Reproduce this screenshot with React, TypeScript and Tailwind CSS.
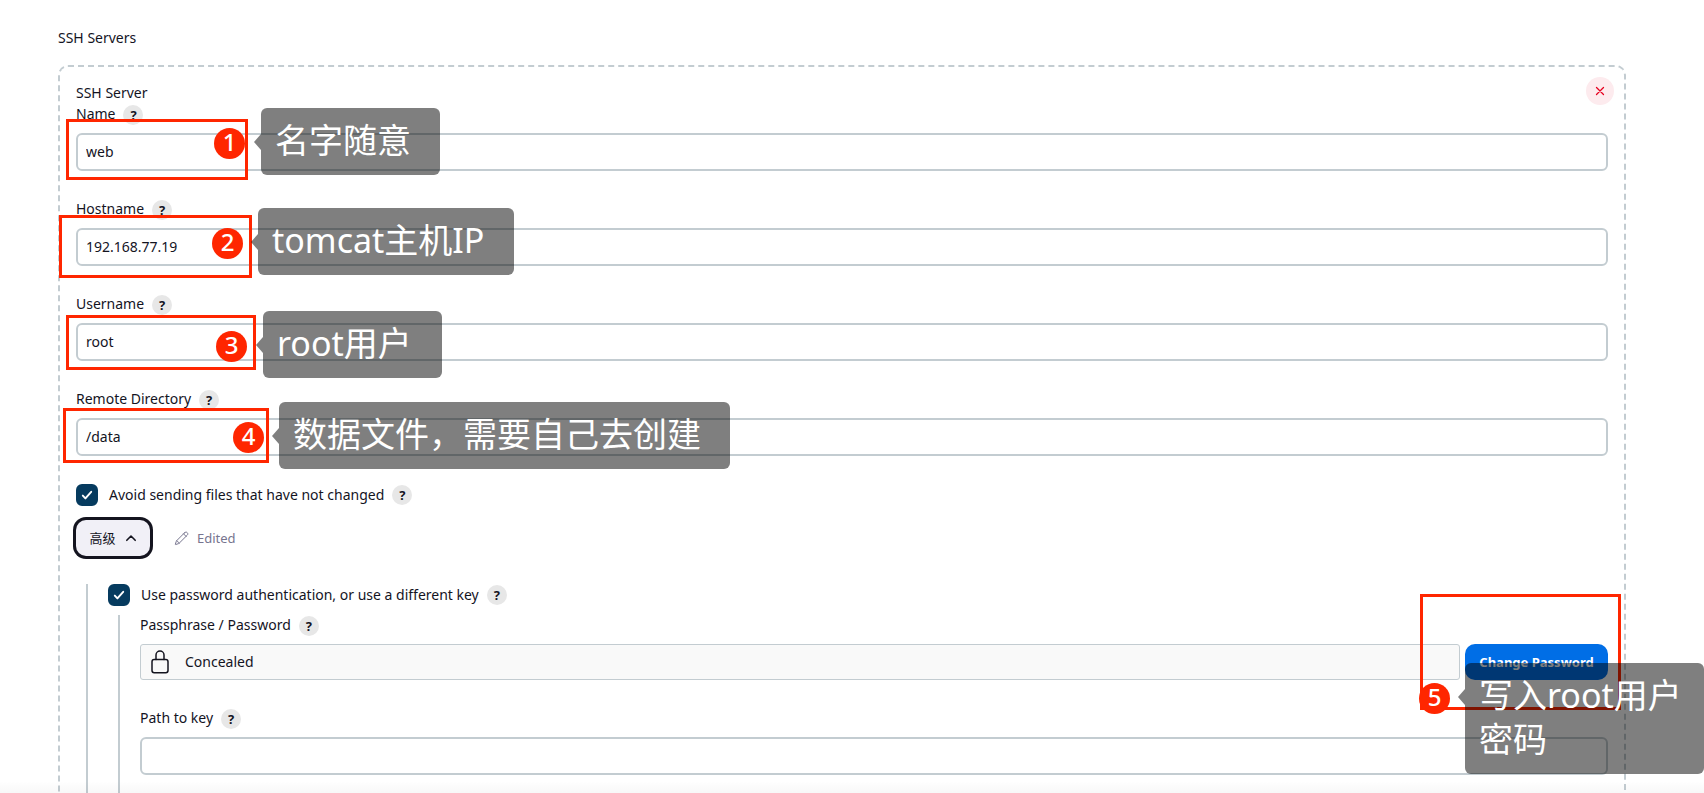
import { useState, type ReactNode } from "react"

function Help({ topic }: { topic: string }) {
  return (
    <button
      type="button"
      aria-label={`Help for feature: ${topic}`}
      className="flex h-5 w-5 shrink-0 items-center justify-center rounded-full bg-[#e7e7e7] text-[13px] leading-5 font-bold text-[#14141f]"
    >
      ?
    </button>
  )
}

function FieldLabel({ id, children }: { id: string; children: string }) {
  return (
    <div className="flex h-5 items-start gap-2">
      <label htmlFor={id} className="leading-[18px]">
        {children}
      </label>
      <Help topic={children} />
    </div>
  )
}

function TextField({ id, label, value = "" }: { id: string; label: string; value?: string }) {
  return (
    <div>
      <FieldLabel id={id}>{label}</FieldLabel>
      <input
        id={id}
        type="text"
        defaultValue={value}
        className="mt-2 block h-[38px] w-full rounded-md border-2 border-[#c3ccd1] bg-white px-2 pb-[2px] outline-none"
      />
    </div>
  )
}

function CheckField({ id, label }: { id: string; label: string }) {
  return (
    <div className="flex h-[22px] items-center gap-2">
      <span className="relative h-[22px] w-[22px] shrink-0">
        <input
          id={id}
          type="checkbox"
          defaultChecked
          className="peer block h-[22px] w-[22px] appearance-none rounded-md border-2 border-[#c3ccd1] checked:border-[#063b5f] checked:bg-[#063b5f]"
        />
        <svg
          viewBox="0 0 22 22"
          className="pointer-events-none absolute inset-0 hidden peer-checked:block"
          fill="none"
          stroke="white"
          strokeWidth="1.9"
          strokeLinecap="round"
          strokeLinejoin="round"
          aria-hidden="true"
        >
          <path d="M6.8 11.6 9.4 14.4 15.2 7.8" />
        </svg>
      </span>
      <label htmlFor={id} className="pl-[3px]">
        {label}
      </label>
      <Help topic={label} />
    </div>
  )
}

function Frame({ className }: { className: string }) {
  return <div className={`pointer-events-none absolute border-3 border-[#ff2600] ${className}`} />
}

function Marker({ className, children }: { className: string; children: ReactNode }) {
  return (
    <div
      className={`pointer-events-none absolute flex h-[31px] w-[31px] items-center justify-center rounded-full bg-[#ff2600] pb-[3px] text-2xl leading-7 font-medium text-white ${className}`}
    >
      {children}
    </div>
  )
}

function Bubble({ className, children }: { className: string; children: ReactNode }) {
  return (
    <div
      className={`pointer-events-none absolute rounded-md bg-black/50 pt-[10px] pb-[13px] pl-[14px] text-[34px] leading-[44px] text-white ${className}`}
    >
      <svg viewBox="0 0 7 16" className="absolute top-[26px] right-full h-4 w-[7px]" aria-hidden="true">
        <path d="M7 0v16L0 8z" fill="black" fillOpacity="0.5" />
      </svg>
      {children}
    </div>
  )
}

export default function App() {
  const [open, setOpen] = useState(true)

  return (
    <div className="relative h-screen overflow-hidden bg-white pt-7 pr-[78px] pl-[58px] font-['Noto_Sans','Noto_Sans_CJK_SC',sans-serif] text-sm leading-5 text-[#14141f]">
      <h2>SSH Servers</h2>

      <section className="mt-[17px] h-[900px] rounded-[10px] border-2 border-dashed border-[#c3ccd1] px-4 pt-[10px]">
        <div className="-mr-[6px] flex h-7 items-start justify-between">
          <h3 className="pt-[6px]">SSH Server</h3>
          <button
            type="button"
            aria-label="Delete"
            className="flex h-7 w-7 items-center justify-center rounded-full bg-[#fdebee] text-[#e6001f]"
          >
            <svg viewBox="0 0 10 10" className="h-[10px] w-[10px]" fill="none" stroke="currentColor" strokeWidth="1.3" strokeLinecap="round" aria-hidden="true">
              <path d="M1.5 1.5l7 7M8.5 1.5l-7 7" />
            </svg>
          </button>
        </div>

        <div className="flex flex-col gap-[29px]">
          <TextField id="name" label="Name" value="web" />
          <TextField id="hostname" label="Hostname" value="192.168.77.19" />
          <TextField id="username" label="Username" value="root" />
          <TextField id="remote-directory" label="Remote Directory" value="/data" />
        </div>

        <div className="mt-7 flex flex-col gap-[14px]">
          <CheckField id="avoid-same" label="Avoid sending files that have not changed" />
          <div className="flex items-center gap-6">
            <button
              type="button"
              aria-expanded={open}
              onClick={() => setOpen(!open)}
              className="flex h-9 w-[74px] items-center justify-center gap-[9px] rounded-[10px] bg-[#f1f0f7] text-[13px] ring-3 ring-[#14141f]"
            >
              高级
              <svg viewBox="0 0 12 12" className="h-3 w-3" fill="none" stroke="currentColor" strokeWidth="1.6" strokeLinecap="round" strokeLinejoin="round" aria-hidden="true">
                <path d="M1.8 8.300 6 4l4.200 4.300" />
              </svg>
            </button>
            <span className="flex items-center gap-2 text-[13px] text-[#77758f]">
              <svg viewBox="0 0 512 512" className="h-[15px] w-[15px]" fill="none" stroke="currentColor" strokeWidth="34" strokeLinecap="round" strokeLinejoin="round" aria-hidden="true">
                <path d="M364 58 91 331q-9 9-13 21L46 450q-4 16 12 12l98-32q12-4 21-13L450 144q22-22 22-43t-20-43-44-20-44 20zM326 98l88 88M94 332q12 32 34 32 18 0 18 18 0 24 32 34" />
              </svg>
              Edited
            </span>
          </div>
        </div>

        {open && (
          <div className="mt-7 ml-[10px] h-96 border-l-2 border-[#c3ccd1] pl-5">
            <CheckField id="override-key" label="Use password authentication, or use a different key" />
            <div className="mt-[9px] ml-[10px] h-80 border-l-2 border-[#c3ccd1] pt-[1px] pl-5">
              <FieldLabel id="password">Passphrase / Password</FieldLabel>
              <div className="mt-2 mb-[29px] flex h-9 gap-[5px]">
                <div className="flex grow items-center gap-4 rounded-[3px] border border-[#c3ccd1] bg-[#f9f9f9] pl-[10px]">
                  <svg viewBox="0 0 18 24" className="h-6 w-[18px] shrink-0" fill="none" stroke="currentColor" strokeWidth="1.5" strokeLinecap="round" strokeLinejoin="round" aria-hidden="true">
                    <rect x="1" y="9.5" width="16" height="13.2" rx="2.2" />
                    <path d="M5 9.5V5a4 4 0 0 1 8 0v4.500" />
                  </svg>
                  <input id="password" type="text" readOnly value="Concealed" className="grow bg-transparent outline-none" />
                </div>
                <button type="button" className="w-[143px] rounded-[10px] bg-[#006ee6] text-[13px] font-bold text-white">
                  Change Password
                </button>
              </div>
              <TextField id="path-to-key" label="Path to key" />
            </div>
          </div>
        )}
      </section>

      <div className="pointer-events-none absolute inset-x-0 bottom-0 h-3 bg-linear-to-b from-transparent to-black/3" />

      <Frame className="top-[119px] left-[66px] h-[61px] w-[182px]" />
      <Marker className="top-[128px] left-[214px]">1</Marker>
      <Bubble className="top-[108px] left-[261px] w-[179px]">名字随意</Bubble>

      <Frame className="top-[215px] left-[59px] h-[63px] w-[193px]" />
      <Marker className="top-[228px] left-[212px]">2</Marker>
      <Bubble className="top-[208px] left-[258px] w-[256px]">tomcat主机IP</Bubble>

      <Frame className="top-[315px] left-[66px] h-[55px] w-[190px]" />
      <Marker className="top-[331px] left-[216px]">3</Marker>
      <Bubble className="top-[311px] left-[263px] w-[179px]">root用户</Bubble>

      <Frame className="top-[408px] left-[63px] h-[55px] w-[206px]" />
      <Marker className="top-[422px] left-[233px]">4</Marker>
      <Bubble className="top-[402px] left-[279px] w-[451px]">数据文件，需要自己去创建</Bubble>

      <Frame className="top-[594px] right-[83px] h-[116px] w-[201px]" />
      <Marker className="top-[683px] right-[254px]">5</Marker>
      <Bubble className="top-[663px] right-0 w-[239px]">
        写入root用户
        <br />
        密码
      </Bubble>
    </div>
  )
}
